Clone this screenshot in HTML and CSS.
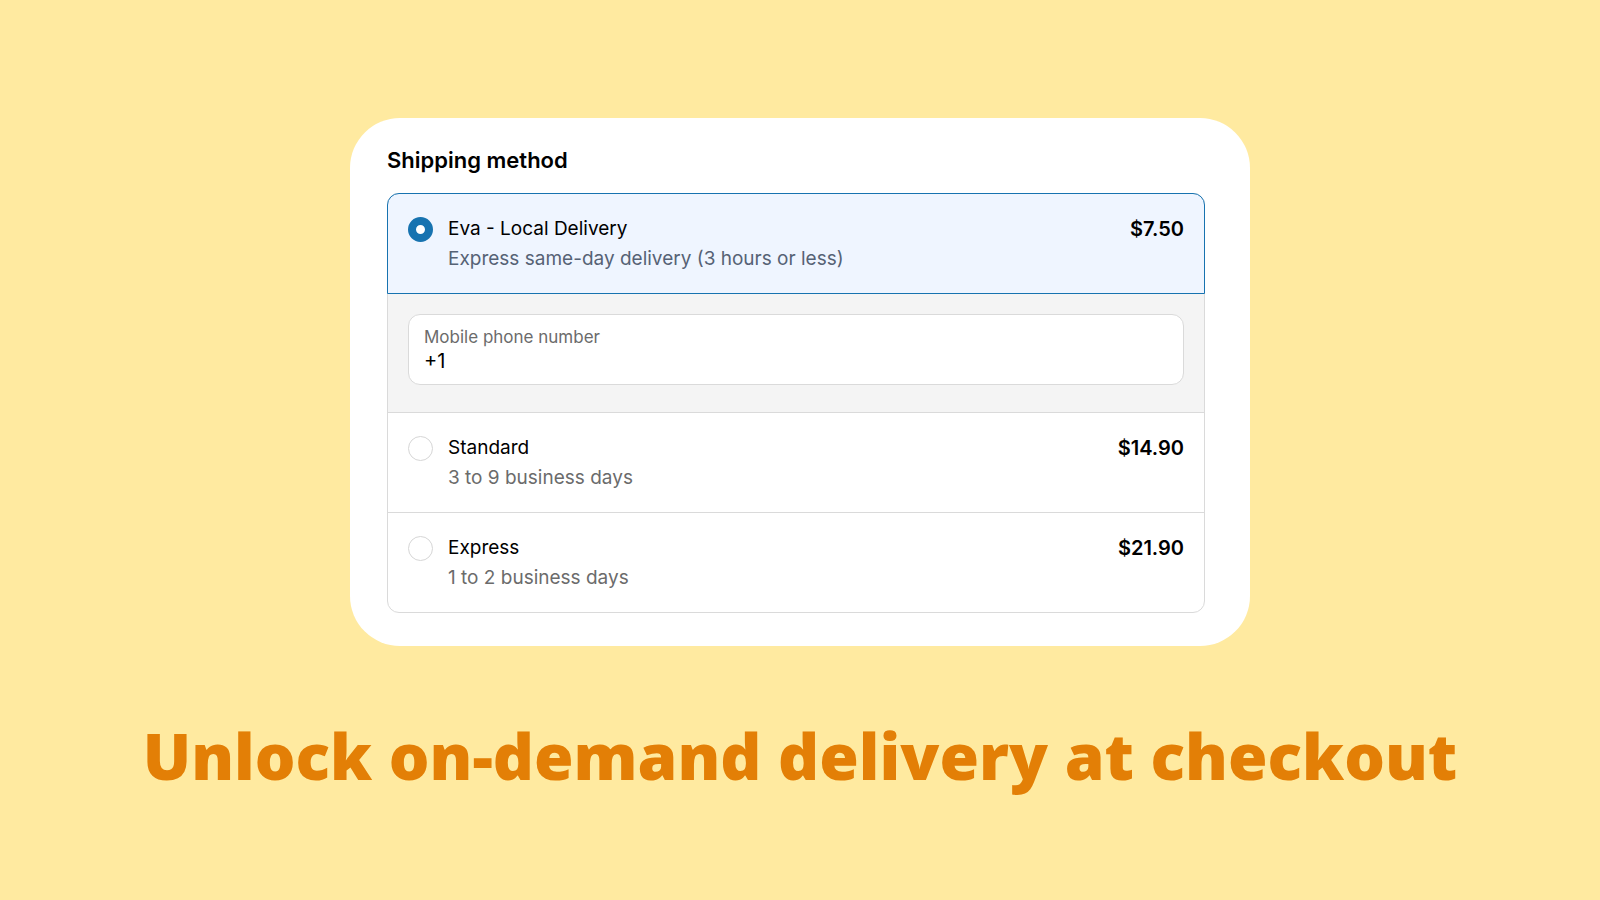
FILE: index.html
```
<!DOCTYPE html>
<html lang="en">
<head>
<meta charset="utf-8">
<meta name="viewport" content="width=device-width, initial-scale=1">
<title>Unlock on-demand delivery at checkout</title>
<link rel="stylesheet" href="styles.css">
</head>
<body>
<main class="page">
  <form class="card">
    <h2 class="card-title" id="shipping-title">Shipping method</h2>
    <div class="options" role="radiogroup" aria-labelledby="shipping-title">
      <label class="option">
        <input class="option-radio" type="radio" name="shipping" value="eva" checked>
        <span class="option-text">
          <span class="option-name">Eva - Local Delivery</span>
          <span class="option-detail">Express same-day delivery (3 hours or less)</span>
        </span>
        <span class="option-price">$7.50</span>
      </label>
      <div class="phone-panel">
        <div class="field">
          <label class="field-label" for="phone">Mobile phone number</label>
          <input class="field-input" id="phone" type="tel" value="+1">
        </div>
      </div>
      <label class="option">
        <input class="option-radio" type="radio" name="shipping" value="standard">
        <span class="option-text">
          <span class="option-name">Standard</span>
          <span class="option-detail">3 to 9 business days</span>
        </span>
        <span class="option-price">$14.90</span>
      </label>
      <label class="option">
        <input class="option-radio" type="radio" name="shipping" value="express">
        <span class="option-text">
          <span class="option-name">Express</span>
          <span class="option-detail">1 to 2 business days</span>
        </span>
        <span class="option-price">$21.90</span>
      </label>
    </div>
  </form>
  <h1 class="headline">Unlock on-demand delivery at checkout</h1>
</main>
</body>
</html>
```
FILE: styles.css
```
* {
  box-sizing: border-box;
}

body {
  margin: 0;
  background: #ffeaa0;
  color: #000;
  font-family: Inter, "Liberation Sans", sans-serif;
}

.page {
  display: flex;
  flex-direction: column;
  align-items: center;
  gap: 66px;
  min-height: 100vh;
  padding: 118px 24px 40px;
}

.card {
  width: 100%;
  max-width: 900px;
  padding: 28px 45px 33px 37px;
  border-radius: 50px;
  background: #fff;
}

.card-title {
  margin: 0 0 19px;
  font-size: 22px;
  font-weight: 600;
  line-height: 28px;
}

.options {
  border: 1px solid #dadada;
  border-radius: 12px;
}

.option {
  display: flex;
  align-items: flex-start;
  gap: 15px;
  padding: 20px 20px 19px;
  border-top: 1px solid #dadada;
  font-size: 19px;
  line-height: 30px;
}

.option:first-child {
  margin: -1px -1px 0;
  border: 1px solid #1773b0;
  border-radius: 12px 12px 0 0;
  background: #eff5ff;
}

.option-radio {
  appearance: none;
  flex: none;
  width: 25px;
  height: 25px;
  margin: 3px 0 0;
  border: 1px solid #d6d6d6;
  border-radius: 50%;
  background: #fff;
}

.option-radio:checked {
  border: 8px solid #1773b0;
}

.option-text {
  display: flex;
  flex: 1;
  flex-direction: column;
}

.option-detail {
  color: #6b6b6b;
}

.option:first-child .option-detail {
  color: #566275;
}

.option-price {
  font-size: 20px;
  font-weight: 600;
}

.phone-panel {
  padding: 20px 20px 27px;
  background: #f4f4f4;
}

.field {
  display: flex;
  flex-direction: column;
  padding: 10px 15px 11px;
  border: 1px solid #dadada;
  border-radius: 12px;
  background: #fff;
}

.field-label {
  color: #6b6b6b;
  font-size: 17px;
  line-height: 24px;
}

.field-input {
  width: 100%;
  height: 24px;
  padding: 0;
  border: 0;
  outline: 0;
  background: transparent;
  color: #000;
  font: inherit;
  font-size: 20px;
}

.headline {
  margin: 0;
  color: #e37f06;
  font-family: "Open Sans", Lato, sans-serif;
  font-size: 64px;
  font-weight: 800;
  line-height: 88px;
  text-align: center;
}
```
